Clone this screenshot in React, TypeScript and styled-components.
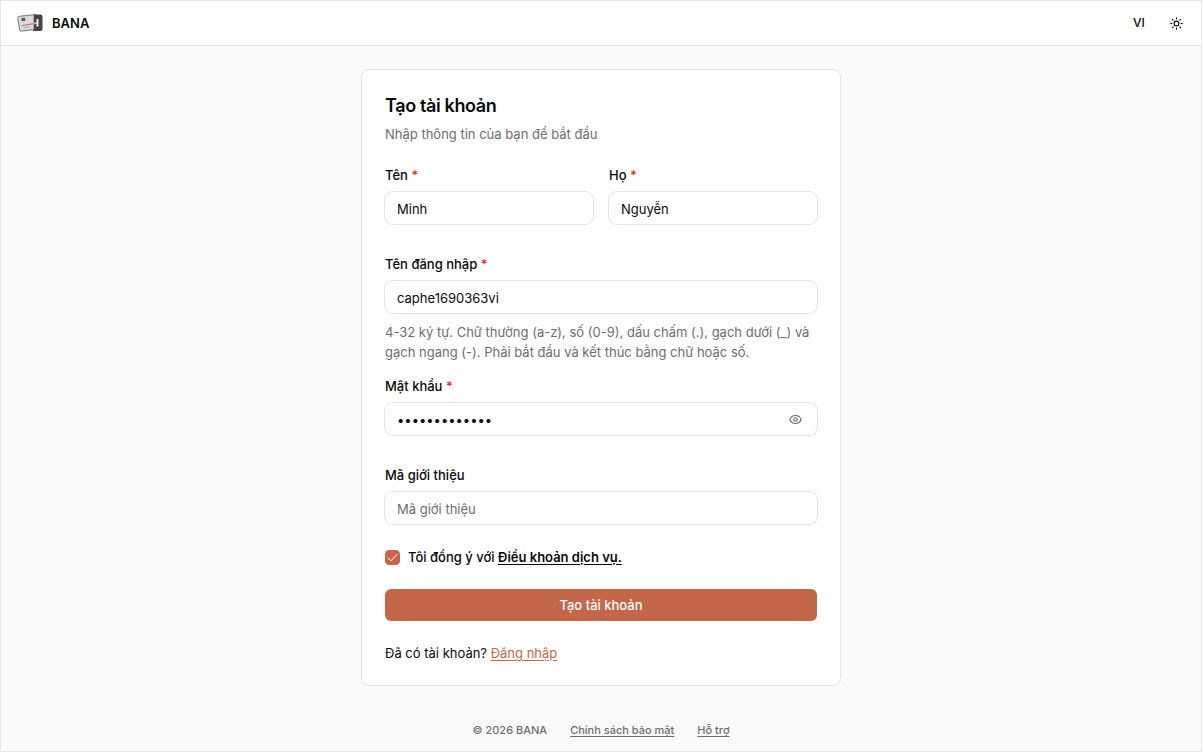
import React, { useState } from "react";
import styled, { createGlobalStyle } from "styled-components";

const GlobalStyle = createGlobalStyle`
  *, *::before, *::after { box-sizing: border-box; }
  body {
    margin: 0;
    background: #fafafa;
    color: #09090b;
    font-family: Inter, sans-serif;
    font-size: 13px;
    line-height: 20px;
  }
  button, input { font: inherit; color: inherit; }
`;

const Page = styled.div`
  display: flex;
  flex-direction: column;
  min-height: 100vh;
  border: 1px solid #e4e4e6;
`;

const Header = styled.header`
  display: flex;
  align-items: center;
  justify-content: space-between;
  height: 45px;
  padding: 0 10px 0 16px;
  background: #fff;
  border-bottom: 1px solid #e4e4e6;
`;

const Brand = styled.a`
  display: flex;
  align-items: center;
  gap: 9px;
  color: inherit;
  font-weight: 600;
  text-decoration: none;
`;

const HeaderActions = styled.div`
  display: flex;
  align-items: center;
  gap: 7px;
`;

const GhostButton = styled.button`
  display: flex;
  align-items: center;
  justify-content: center;
  width: 30px;
  height: 30px;
  padding: 0;
  border: 0;
  border-radius: 8px;
  background: transparent;
  font-size: 12px;
  font-weight: 500;
  cursor: pointer;
`;

const Main = styled.main`
  display: flex;
  flex: 1;
  justify-content: center;
  align-items: flex-start;
  padding: 23px 16px 24px;
`;

const Card = styled.section`
  width: 100%;
  max-width: 480px;
  padding: 24px 23px 22px;
  background: #fff;
  border: 1px solid #e4e4e6;
  border-radius: 8px;
`;

const Title = styled.h1`
  margin: 0 0 6px;
  font-size: 18px;
  line-height: 24px;
  font-weight: 600;
  letter-spacing: -0.02em;
`;

const Muted = styled.p`
  margin: 0;
  color: #6c6d74;
`;

const Form = styled.form`
  display: flex;
  flex-direction: column;
  margin-top: 21px;
`;

const Columns = styled.div`
  display: grid;
  grid-template-columns: 1fr 1fr;
  gap: 16px;
`;

const Field = styled.div<{ $spaced?: boolean }>`
  display: flex;
  flex-direction: column;
  gap: 7px;
  min-width: 0;
  margin-bottom: ${(p) => (p.$spaced ? "30px" : "0")};
`;

const Label = styled.label`
  font-weight: 500;
`;

const Required = styled.span`
  color: #dc2626;
`;

const InputShell = styled.div`
  display: flex;
  align-items: center;
  height: 32px;
  padding: 1px 12px 0;
  background: #fff;
  border-radius: 8px;
  box-shadow: 0 0 0 1px #e4e4e6;
`;

const Input = styled.input`
  flex: 1;
  min-width: 0;
  height: 20px;
  padding: 0;
  border: 0;
  outline: 0;
  background: transparent;
  &::placeholder { color: #6c6d74; opacity: 1; }
`;

const EyeButton = styled.button`
  display: flex;
  padding: 2px;
  border: 0;
  background: transparent;
  color: #6c6d74;
  cursor: pointer;
`;

const Hint = styled(Muted)`
  margin: 9px 0 14px;
`;

const Consent = styled.div`
  display: flex;
  align-items: center;
  gap: 8px;
  margin: -7px 0 22px;
`;

const Checkbox = styled.input`
  appearance: none;
  width: 15px;
  height: 15px;
  margin: 0;
  border: 1px solid #c4664a;
  border-radius: 4px;
  background: #fff;
  &:checked { background: #c4664a; }
`;

const CheckWrap = styled.span`
  display: grid;
  > * { grid-area: 1 / 1; }
  svg { pointer-events: none; }
`;

const ConsentLabel = styled.label`
  font-weight: 500;
`;

const TermsLink = styled.a`
  color: inherit;
  font-weight: 600;
  text-underline-offset: 2px;
`;

const Submit = styled.button`
  height: 32px;
  border: 0;
  border-radius: 6px;
  background: #c4664a;
  color: #fff;
  font-weight: 500;
  cursor: pointer;
`;

const SignIn = styled.p`
  margin: 22px 0 0;
`;

const AccentLink = styled.a`
  color: #c4664a;
  text-underline-offset: 2px;
`;

const Footer = styled.footer`
  display: flex;
  justify-content: center;
  gap: 23px;
  padding: 0 16px 12px;
  color: #6c6d74;
  font-size: 11px;
  line-height: 18px;
  font-weight: 500;
`;

const FooterLink = styled.a`
  color: inherit;
  text-underline-offset: 2px;
`;

const Logo = () => (
  <svg width="26" height="20" viewBox="0 0 26 20" aria-hidden="true">
    <path d="M16 1.500h7.500q2 0 2 2v12.500q0 2-2 2H16z" fill="#454547" />
    <path d="M2.500 3.300 17 1.700V16.500L4 18.200Q2.800 18.300 2.600 17L.8 5.300Q.6 3.600 2.500 3.300Z" fill="#d9dadb" stroke="#77797b" />
    <path d="M4.300 5.200 8 4.700l.5 3-3.700.5z" fill="#545658" />
    <path d="M4.500 12.600 19 10.300" stroke="#df7770" strokeWidth="1.200" />
    <path d="M7 14.600 13 13.700" stroke="#aaa" strokeWidth=".7" />
    <path d="M17 1.500h2v8h-2zM17 11.500h2v6.500h-2z" fill="#454547" />
    <path d="M20.500 6v7.500" stroke="#fff" strokeWidth="1.800" />
    <path d="M17.500 10h2.500" stroke="#fff" />
  </svg>
);

const SunIcon = () => (
  <svg width="15" height="15" viewBox="0 0 15 15" fill="none" stroke="currentColor" strokeWidth="1.100" aria-hidden="true">
    <circle cx="7.500" cy="7.500" r="2.400" />
    <path
      strokeLinecap="round"
      d="M7.500 1.700v1.200M7.500 12.100v1.200M1.700 7.500h1.200M12.100 7.500h1.200M3.400 3.400l.8.800M10.800 10.800l.8.800M3.400 11.600l.8-.8M10.800 4.200l.8-.8"
    />
  </svg>
);

const EyeIcon = () => (
  <svg width="15" height="15" viewBox="0 0 15 15" fill="none" stroke="currentColor" strokeWidth="1.100" aria-hidden="true">
    <path d="M1.800 7.500C2.800 4.900 4.900 3.500 7.500 3.500s4.700 1.400 5.700 4c-1 2.600-3.100 4-5.700 4s-4.700-1.400-5.700-4Z" />
    <circle cx="7.500" cy="7.500" r="1.700" />
  </svg>
);

const CheckIcon = () => (
  <svg width="15" height="15" viewBox="0 0 15 15" fill="none" stroke="#fff" strokeLinecap="round" strokeLinejoin="round" aria-hidden="true">
    <path d="m3 8 2.900 2.800 6.200-6.500" />
  </svg>
);

type TextFieldProps = {
  id: string;
  label: string;
  value?: string;
  placeholder?: string;
  required?: boolean;
  spaced?: boolean;
  type?: string;
  children?: React.ReactNode;
};

const TextField = ({ id, label, value, placeholder, required, spaced, type = "text", children }: TextFieldProps) => (
  <Field $spaced={spaced}>
    <Label htmlFor={id}>
      {label}
      {required && <Required> *</Required>}
    </Label>
    <InputShell>
      <Input id={id} type={type} defaultValue={value} placeholder={placeholder} />
      {children}
    </InputShell>
  </Field>
);

export default function App() {
  const [agreed, setAgreed] = useState(true);
  const [visible, setVisible] = useState(false);

  return (
    <>
      <GlobalStyle />
      <Page>
        <Header>
          <Brand href="#">
            <Logo />
            BANA
          </Brand>
          <HeaderActions>
            <GhostButton type="button">VI</GhostButton>
            <GhostButton type="button" aria-label="Giao diện">
              <SunIcon />
            </GhostButton>
          </HeaderActions>
        </Header>
        <Main>
          <Card>
            <Title>Tạo tài khoản</Title>
            <Muted>Nhập thông tin của bạn để bắt đầu</Muted>
            <Form onSubmit={(e) => e.preventDefault()}>
              <Columns>
                <TextField id="first" label="Tên" value="Minh" required spaced />
                <TextField id="last" label="Họ" value="Nguyễn" required spaced />
              </Columns>
              <TextField id="username" label="Tên đăng nhập" value="caphe1690363vi" required />
              <Hint>
                4-32 ký tự. Chữ thường (a-z), số (0-9), dấu chấm (.), gạch dưới (_) và gạch ngang (-). Phải bắt đầu và
                kết thúc bằng chữ hoặc số.
              </Hint>
              <TextField
                id="password"
                label="Mật khẩu"
                value="matkhau169036"
                type={visible ? "text" : "password"}
                required
                spaced
              >
                <EyeButton type="button" aria-label="Hiện mật khẩu" onClick={() => setVisible(!visible)}>
                  <EyeIcon />
                </EyeButton>
              </TextField>
              <TextField id="referral" label="Mã giới thiệu" placeholder="Mã giới thiệu" spaced />
              <Consent>
                <CheckWrap>
                  <Checkbox id="terms" type="checkbox" checked={agreed} onChange={(e) => setAgreed(e.target.checked)} />
                  {agreed && <CheckIcon />}
                </CheckWrap>
                <ConsentLabel htmlFor="terms">
                  Tôi đồng ý với <TermsLink href="#">Điều khoản dịch vụ.</TermsLink>
                </ConsentLabel>
              </Consent>
              <Submit type="submit">Tạo tài khoản</Submit>
            </Form>
            <SignIn>
              Đã có tài khoản? <AccentLink href="#">Đăng nhập</AccentLink>
            </SignIn>
          </Card>
        </Main>
        <Footer>
          <span>© 2026 BANA</span>
          <FooterLink href="#">Chính sách bảo mật</FooterLink>
          <FooterLink href="#">Hỗ trợ</FooterLink>
        </Footer>
      </Page>
    </>
  );
}
